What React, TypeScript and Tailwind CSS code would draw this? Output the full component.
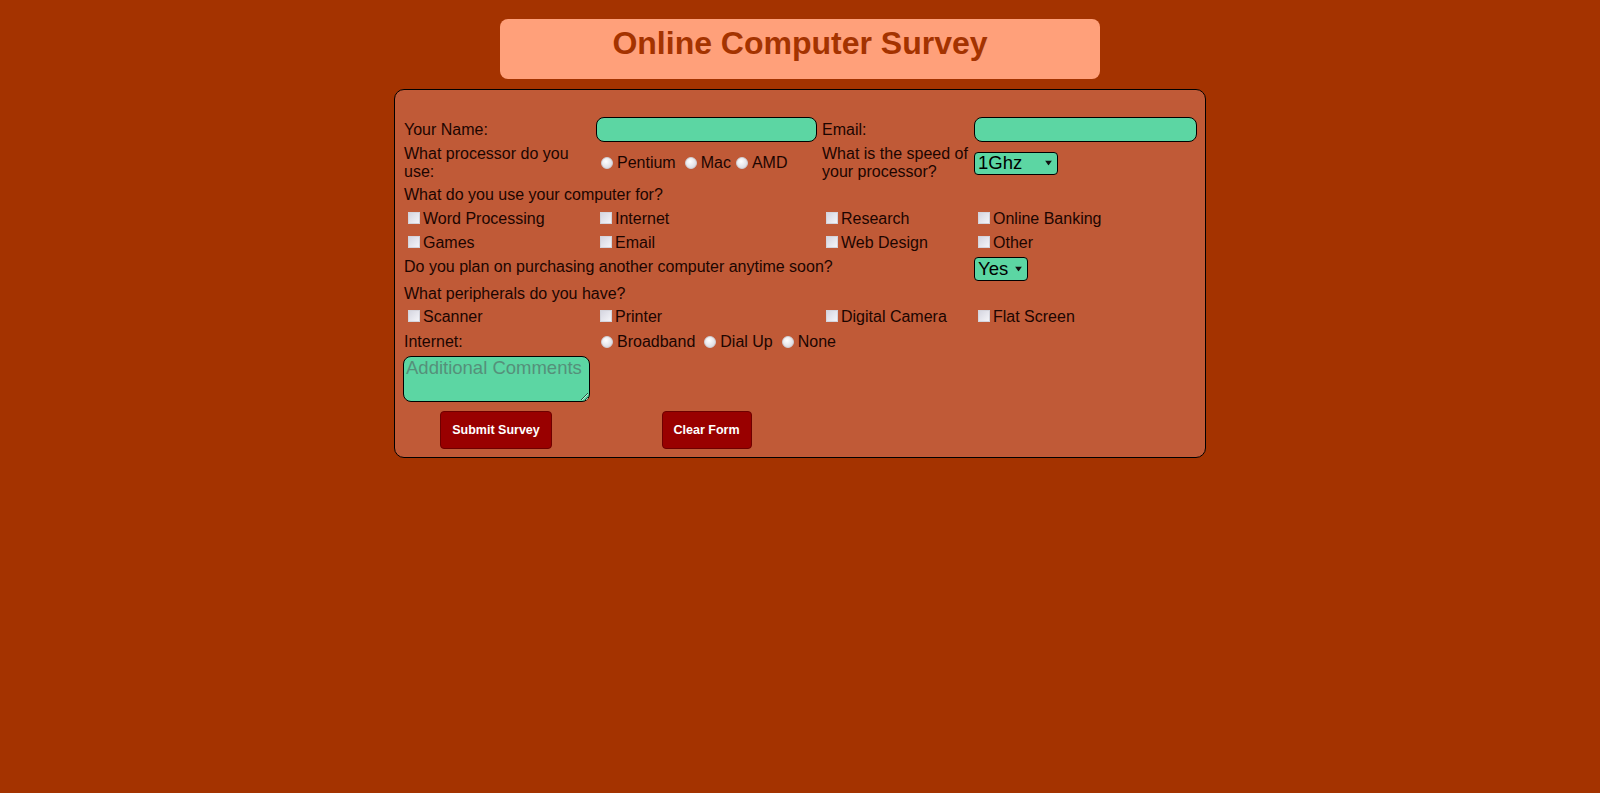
import React from "react";

const row = "grid grid-cols-[192px_226px_152px_224px] items-center";

const Check = ({ label }: { label: string }) => (
    <label className="inline-flex items-center">
        <input
            type="checkbox"
            className="appearance-none w-[12px] h-[12px] ml-[4px] mr-[3px] -translate-y-[1px] border border-[#d4d4dc] bg-[linear-gradient(135deg,#d6d6e0,#f4f4f8)]"
        />
        {label}
    </label>
);

const Radio = ({ label, name, tight }: { label: string; name: string; tight?: boolean }) => (
    <label className={"inline-flex items-center " + (tight ? "" : "mr-[4px]")}>
        <input
            type="radio"
            name={name}
            className="appearance-none w-[12px] h-[12px] ml-[5px] mr-[4px] rounded-full border border-[#d0d0d6] bg-[radial-gradient(circle_at_40%_35%,#ffffff,#d2d2da)]"
        />
        {label}
    </label>
);

const Arrow = () => (
    <svg className="absolute right-[6px] top-1/2 -translate-y-1/2 pointer-events-none" width="7" height="5" viewBox="0 0 7 5">
        <path d="M0 0 L7 0 L3.5 5 Z" fill="#111" />
    </svg>
);

const Select = ({ value, options, w, h }: { value: string; options: string[]; w: string; h: string }) => (
    <div className={"relative " + w + " " + h}>
        <select
            defaultValue={value}
            className="appearance-none w-full h-full rounded-[4px] border border-black bg-[#5cd6a3] pl-[3px] text-[18.5px] leading-none text-black outline-none"
        >
            {options.map((o) => (
                <option key={o}>{o}</option>
            ))}
        </select>
        <Arrow />
    </div>
);

const App = () => {
    return (
        <div className="min-h-screen bg-[#a43300] font-['Liberation_Sans',Arial,sans-serif] text-[16px] text-[#1c0500] pt-[19px]">
            <div className="mx-auto w-[600px] h-[60px] rounded-[8px] bg-[#ffa07a] pt-[6px]">
                <h1 className="text-center text-[32px] leading-[37px] font-bold text-[#a43300]">Online Computer Survey</h1>
            </div>

            <form className="mx-auto mt-[10px] w-[812px] rounded-[10px] border border-black bg-[#c05a37] pl-[9px] pr-[7px] pt-[25px]">
                <div className={row + " h-[29px]"}>
                    <span>Your Name:</span>
                    <input type="text" className="w-[221px] h-[25px] rounded-[8px] border border-black bg-[#5cd6a3] outline-none" />
                    <span>Email:</span>
                    <input type="text" className="w-[223px] h-[25px] rounded-[8px] border border-black bg-[#5cd6a3] outline-none" />
                </div>

                <div className={row + " h-[38px] leading-[18px]"}>
                    <span className="pr-[20px]">What processor do you use:</span>
                    <div className="flex items-center">
                        <Radio label="Pentium" name="cpu" />
                        <Radio label="Mac" name="cpu" tight />
                        <Radio label="AMD" name="cpu" />
                    </div>
                    <span>What is the speed of your processor?</span>
                    <Select value="1Ghz" options={["1Ghz", "2Ghz", "3Ghz", "4Ghz"]} w="w-[84px]" h="h-[23px]" />
                </div>

                <div className={row + " h-[25px]"}>
                    <span className="col-span-4">What do you use your computer for?</span>
                </div>

                <div className={row + " h-[23px]"}>
                    <Check label="Word Processing" />
                    <Check label="Internet" />
                    <Check label="Research" />
                    <Check label="Online Banking" />
                </div>
                <div className={row + " h-[25px]"}>
                    <Check label="Games" />
                    <Check label="Email" />
                    <Check label="Web Design" />
                    <Check label="Other" />
                </div>

                <div className={row + " h-[26px]"}>
                    <span className="col-span-3 -translate-y-[1px]">Do you plan on purchasing another computer anytime soon?</span>
                    <div className="translate-y-[1px]">
                        <Select value="Yes" options={["Yes", "No"]} w="w-[54px]" h="h-[24px]" />
                    </div>
                </div>

                <div className={row + " h-[24px]"}>
                    <span className="col-span-4 translate-y-[1px]">What peripherals do you have?</span>
                </div>

                <div className={row + " h-[24px]"}>
                    <Check label="Scanner" />
                    <Check label="Printer" />
                    <Check label="Digital Camera" />
                    <Check label="Flat Screen" />
                </div>

                <div className={row + " h-[25px]"}>
                    <span>Internet:</span>
                    <div className="col-span-2 flex items-center">
                        <Radio label="Broadband" name="net" />
                        <Radio label="Dial Up" name="net" />
                        <Radio label="None" name="net" />
                    </div>
                </div>

                <div className="h-[50px] pt-[2px] -ml-[1px]">
                    <textarea
                        placeholder="Additional Comments"
                        className="block w-[187px] h-[46px] rounded-[8px] border border-black bg-[#5cd6a3] px-[2px] text-[18.5px] leading-[21px] outline-none placeholder:text-[#55907a]"
                    />
                </div>

                <div className="grid grid-cols-[184px_237px] h-[53px] pt-[7px] items-start">
                    <div className="flex justify-center">
                        <button type="submit" className="h-[38px] px-[11px] rounded-[4px] border border-[#6e0000] bg-[#990000] text-[12.5px] font-bold text-white">
                            Submit Survey
                        </button>
                    </div>
                    <div className="flex justify-center">
                        <button type="reset" className="h-[38px] px-[11px] rounded-[4px] border border-[#6e0000] bg-[#990000] text-[12.5px] font-bold text-white">
                            Clear Form
                        </button>
                    </div>
                </div>
            </form>
        </div>
    );
};

export default App;
